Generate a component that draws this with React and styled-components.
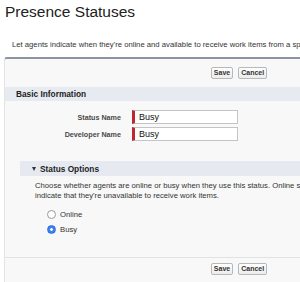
import React from 'react';
import styled, { createGlobalStyle } from 'styled-components';

const Global = createGlobalStyle`
    body {
        margin: 0;
        background: #fff;
        font-family: "Liberation Sans", Arial, sans-serif;
        overflow: hidden;
    }
`;

const Page = styled.div`
    width: 300px;
    height: 282px;
    overflow: hidden;
    padding: 0 0 0 4px;
    box-sizing: border-box;
`;

const Title = styled.h1`
    margin: 0;
    padding: 3px 0 0 1px;
    font-size: 15.5px;
    font-weight: normal;
    color: #222;
    line-height: 18px;
    white-space: nowrap;
`;

const Intro = styled.p`
    margin: 19px 0 0 8px;
    font-size: 7.7px;
    line-height: 10px;
    color: #333;
    white-space: nowrap;
`;

const Panel = styled.section`
    margin-top: 7px;
    width: 470px;
    height: 240px;
    background: #f8f8f8;
    border: 1px solid #e4e4e4;
    border-top: 2px solid #8d95a2;
    border-radius: 3px;
    box-sizing: border-box;
`;

const ButtonRow = styled.div`
    display: flex;
    justify-content: center;
    gap: 5px;
    padding: ${p => (p.$bottom ? '5px 0 0' : '8px 0')};
    border-top: ${p => (p.$bottom ? '1px solid #e2e2e2' : 'none')};
    margin-top: ${p => (p.$bottom ? '23px' : '0')};
`;

const Btn = styled.button`
    height: 12px;
    padding: 0 2px;
    font-family: inherit;
    font-size: 7px;
    font-weight: bold;
    color: #333;
    background: linear-gradient(#fff, #ececec);
    border: 1px solid #b8b8b8;
    border-radius: 2px;
    line-height: 10px;
`;

const SectionHead = styled.h2`
    margin: 0;
    height: 14px;
    padding-left: 11px;
    background: #e7ebf1;
    font-size: 8.3px;
    font-weight: bold;
    color: #222;
    line-height: 14px;
`;

const Form = styled.div`
    display: grid;
    grid-template-columns: 116px 106px;
    column-gap: 11px;
    row-gap: 3px;
    align-items: center;
    padding-top: 9px;
`;

const Label = styled.label`
    text-align: right;
    font-size: 7.2px;
    font-weight: bold;
    color: #4a4a4a;
`;

const Input = styled.input`
    height: 14px;
    box-sizing: border-box;
    padding: 0 0 0 4px;
    font-family: inherit;
    font-size: 9px;
    color: #111;
    background: #fff;
    border: 1px solid #c4c4c4;
    border-left: 3px solid #c0272d;
    outline: none;
`;

const SubHead = styled.h3`
    margin: 20px 0 0 15px;
    height: 15px;
    display: flex;
    align-items: center;
    gap: 4px;
    padding-left: 12px;
    background: #e6e9f0;
    font-size: 8.3px;
    font-weight: bold;
    color: #222;
`;

const Arrow = styled.span`
    width: 0;
    height: 0;
    border-left: 2.5px solid transparent;
    border-right: 2.5px solid transparent;
    border-top: 4px solid #333;
`;

const Help = styled.p`
    margin: 5px 0 0 30px;
    font-size: 7.7px;
    line-height: 10px;
    color: #333;
    white-space: nowrap;
`;

const Options = styled.div`
    display: flex;
    flex-direction: column;
    gap: 5px;
    margin: 8px 0 0 42px;
`;

const Option = styled.label`
    display: flex;
    align-items: center;
    gap: 4px;
    height: 10px;
    font-size: 7.7px;
    color: #333;
`;

const Radio = styled.span`
    width: 9px;
    height: 9px;
    box-sizing: border-box;
    border-radius: 50%;
    border: 1px solid ${p => (p.$on ? '#2d6fe0' : '#9a9a9a')};
    background: ${p => (p.$on ? 'radial-gradient(circle, #fff 0 1.2px, #3c82f0 1.5px)' : '#fff')};
`;

export default function App() {
    return (
        <Page>
            <Global />
            <Title>Presence Statuses</Title>
            <Intro>Let agents indicate when they're online and available to receive work items from a specific channel.</Intro>
            <Panel>
                <ButtonRow>
                    <Btn>Save</Btn>
                    <Btn>Cancel</Btn>
                </ButtonRow>
                <SectionHead>Basic Information</SectionHead>
                <Form>
                    <Label>Status Name</Label>
                    <Input defaultValue="Busy" />
                    <Label>Developer Name</Label>
                    <Input defaultValue="Busy" />
                </Form>
                <SubHead><Arrow />Status Options</SubHead>
                <Help>
                    Choose whether agents are online or busy when they use this status. Online statuses let agents<br />
                    indicate that they're unavailable to receive work items.
                </Help>
                <Options>
                    <Option><Radio />Online</Option>
                    <Option><Radio $on />Busy</Option>
                </Options>
                <ButtonRow $bottom>
                    <Btn>Save</Btn>
                    <Btn>Cancel</Btn>
                </ButtonRow>
            </Panel>
        </Page>
    );
}
